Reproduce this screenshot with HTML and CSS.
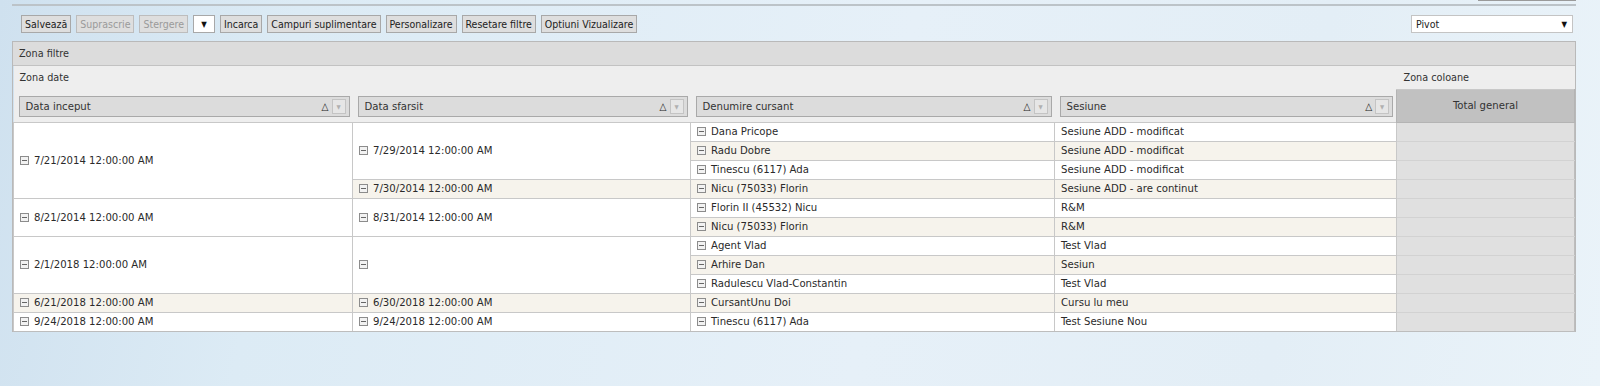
FILE: index.html
```html
<!DOCTYPE html>
<html lang="ro">
<head>
  <meta charset="UTF-8" />
  <title>Pivot</title>
  <link rel="stylesheet" href="styles.css">
</head>
<body>
  <div class="topbar">
    <div class="top-btn"></div>
  </div>

  <div class="toolbar">
    <div class="actions">
      <span class="btn">Salvează</span>
      <span class="btn disabled">Suprascrie</span>
      <span class="btn disabled">Stergere</span>
      <span class="mini-select">▼</span>
      <span class="btn">Incarca</span>
      <span class="btn">Campuri suplimentare</span>
      <span class="btn">Personalizare</span>
      <span class="btn">Resetare filtre</span>
      <span class="btn">Optiuni Vizualizare</span>
    </div>
    <div class="view-select">
      <span>Pivot</span>
      <span class="arrow">▼</span>
    </div>
  </div>

  <div class="pivot">
    <div class="filter-zone">Zona filtre</div>
    <table class="grid">
      <colgroup>
        <col class="c1"><col class="c2"><col class="c3"><col class="c4"><col class="c5">
      </colgroup>
      <thead>
        <tr class="zone-row">
          <td colspan="4">Zona date</td>
          <td class="zone-cols">Zona coloane</td>
        </tr>
        <tr class="head-row">
          <th><div class="field"><span>Data inceput</span><span class="sort">△</span><span class="drop">▼</span></div></th>
          <th><div class="field"><span>Data sfarsit</span><span class="sort">△</span><span class="drop">▼</span></div></th>
          <th><div class="field"><span>Denumire cursant</span><span class="sort">△</span><span class="drop">▼</span></div></th>
          <th><div class="field"><span>Sesiune</span><span class="sort">△</span><span class="drop">▼</span></div></th>
          <th class="total-head">Total general</th>
        </tr>
      </thead>
      <tbody>
        <tr>
          <td rowspan="4"><i class="minus"></i>7/21/2014 12:00:00 AM</td>
          <td rowspan="3"><i class="minus"></i>7/29/2014 12:00:00 AM</td>
          <td><i class="minus"></i>Dana Pricope</td>
          <td>Sesiune ADD - modificat</td>
          <td class="total"></td>
        </tr>
        <tr class="alt">
          <td><i class="minus"></i>Radu Dobre</td>
          <td>Sesiune ADD - modificat</td>
          <td class="total"></td>
        </tr>
        <tr>
          <td><i class="minus"></i>Tinescu (6117) Ada</td>
          <td>Sesiune ADD - modificat</td>
          <td class="total"></td>
        </tr>
        <tr class="alt">
          <td><i class="minus"></i>7/30/2014 12:00:00 AM</td>
          <td><i class="minus"></i>Nicu (75033) Florin</td>
          <td>Sesiune ADD - are continut</td>
          <td class="total"></td>
        </tr>
        <tr>
          <td rowspan="2"><i class="minus"></i>8/21/2014 12:00:00 AM</td>
          <td rowspan="2"><i class="minus"></i>8/31/2014 12:00:00 AM</td>
          <td><i class="minus"></i>Florin II (45532) Nicu</td>
          <td>R&amp;M</td>
          <td class="total"></td>
        </tr>
        <tr class="alt">
          <td><i class="minus"></i>Nicu (75033) Florin</td>
          <td>R&amp;M</td>
          <td class="total"></td>
        </tr>
        <tr>
          <td rowspan="3"><i class="minus"></i>2/1/2018 12:00:00 AM</td>
          <td rowspan="3"><i class="minus"></i></td>
          <td><i class="minus"></i>Agent Vlad</td>
          <td>Test Vlad</td>
          <td class="total"></td>
        </tr>
        <tr class="alt">
          <td><i class="minus"></i>Arhire Dan</td>
          <td>Sesiun</td>
          <td class="total"></td>
        </tr>
        <tr>
          <td><i class="minus"></i>Radulescu Vlad-Constantin</td>
          <td>Test Vlad</td>
          <td class="total"></td>
        </tr>
        <tr class="alt">
          <td><i class="minus"></i>6/21/2018 12:00:00 AM</td>
          <td><i class="minus"></i>6/30/2018 12:00:00 AM</td>
          <td><i class="minus"></i>CursantUnu Doi</td>
          <td>Cursu lu meu</td>
          <td class="total"></td>
        </tr>
        <tr>
          <td><i class="minus"></i>9/24/2018 12:00:00 AM</td>
          <td><i class="minus"></i>9/24/2018 12:00:00 AM</td>
          <td><i class="minus"></i>Tinescu (6117) Ada</td>
          <td>Test Sesiune Nou</td>
          <td class="total"></td>
        </tr>
      </tbody>
    </table>
  </div>
</body>
</html>
```

FILE: styles.css
```css
body {
  margin: 0;
  padding: 0 24px 0 12px;
  height: 386px;
  overflow: hidden;
  font-family: 'DejaVu Sans Condensed', 'DejaVu Sans', sans-serif;
  font-size: 11.25px;
  color: #333;
  background: linear-gradient(100deg, #cfe1ef 0%, #dcebf5 18%, #e6f0f8 55%, #e3eef6 80%, #eaf3f9 100%);
}

.topbar {
  height: 4px;
  border-bottom: 2px solid #bcc3c8;
  position: relative;
}

.top-btn {
  position: absolute;
  right: 0;
  top: -6px;
  width: 98px;
  height: 6px;
  border-bottom: 1px solid #9a9a9a;
  background: #d4d4d4;
}

.toolbar {
  display: flex;
  justify-content: space-between;
  align-items: center;
  padding: 9px 3px 0 9px;
  height: 18px;
  margin-bottom: 8px;
  font-size: 10.5px;
}

.actions {
  display: flex;
  gap: 5px;
}

.btn {
  display: flex;
  align-items: center;
  height: 16px;
  padding: 0 3px;
  border: 1px solid #a8a8a8;
  background: #dedede;
  color: #222;
  white-space: nowrap;
}

.btn.disabled {
  color: #9a9a9a;
  border-color: #bdbdbd;
}

.mini-select {
  width: 20px;
  height: 16px;
  border: 1px solid #a8a8a8;
  background: #fff;
  font-size: 8px;
  display: flex;
  align-items: center;
  justify-content: center;
  color: #111;
}

.view-select {
  width: 151px;
  height: 16px;
  border: 1px solid #c4c4c4;
  background: #fff;
  display: flex;
  align-items: center;
  justify-content: space-between;
  padding: 0 5px 0 4px;
  color: #222;
}

.view-select .arrow {
  font-size: 8px;
  color: #111;
}

.pivot {
  border: 1px solid #b9b9b9;
  border-bottom: none;
}

.filter-zone {
  height: 23px;
  line-height: 23px;
  padding-left: 6px;
  background: #dcdcdc;
  border-bottom: 1px solid #c2c2c2;
  font-size: 10.75px;
}

.grid {
  width: 100%;
  table-layout: fixed;
  border-collapse: collapse;
}

.c1 { width: 339px; }
.c2 { width: 338px; }
.c3 { width: 364px; }
.c4 { width: 342px; }
.c5 { width: auto; }

.zone-row td {
  height: 23px;
  padding: 0 0 0 6px;
  background: #eeeeee;
  vertical-align: middle;
  font-size: 10.75px;
}

.zone-row .zone-cols {
  padding-left: 7px;
}

.head-row th {
  height: 22px;
  padding: 6px 3px 4px 5px;
  background: #eeeeee;
  font-weight: normal;
  text-align: left;
  vertical-align: top;
}

.field {
  display: flex;
  align-items: center;
  height: 19px;
  border: 1px solid #a9a9a9;
  background: #dcdcdc;
  padding: 0 3px 0 6px;
}

.field span:first-child {
  flex: 1;
}

.field .sort {
  font-size: 10px;
  color: #222;
  margin-right: 3px;
}

.field .drop {
  width: 12px;
  height: 13px;
  border: 1px solid #c4c4c4;
  background: #e6e6e6;
  color: #b0b0b0;
  font-size: 6px;
  display: flex;
  align-items: center;
  justify-content: center;
}

.head-row .total-head {
  padding: 0;
  text-align: center;
  vertical-align: middle;
  background: #c1c1c1;
  border: 1px solid #b4b4b4;
  border-top: 1px solid #c8c8c8;
}

.grid tbody td {
  height: 18px;
  padding: 0 0 0 6px;
  border: 1px solid #c8c8c8;
  background: #fff;
  white-space: nowrap;
  vertical-align: middle;
  color: #2a2a2a;
}

.grid tbody tr.alt td {
  background: #f6f3ec;
}

.grid tbody td.total,
.grid tbody tr.alt td.total {
  background: #e0e0e0;
  border-color: #d2d2d2;
  border-left-color: #c2c2c2;
  border-right-color: #bdbdbd;
}

.grid tbody tr:last-child td {
  border-bottom-color: #bdbdbd;
}

.minus {
  display: inline-block;
  position: relative;
  width: 7px;
  height: 7px;
  border: 1px solid #8c8c8c;
  background: #f2f2f2;
  margin-right: 5px;
  vertical-align: -1px;
}

.minus::after {
  content: '';
  position: absolute;
  left: 1px;
  right: 1px;
  top: 3px;
  height: 1px;
  background: #666;
}
```
